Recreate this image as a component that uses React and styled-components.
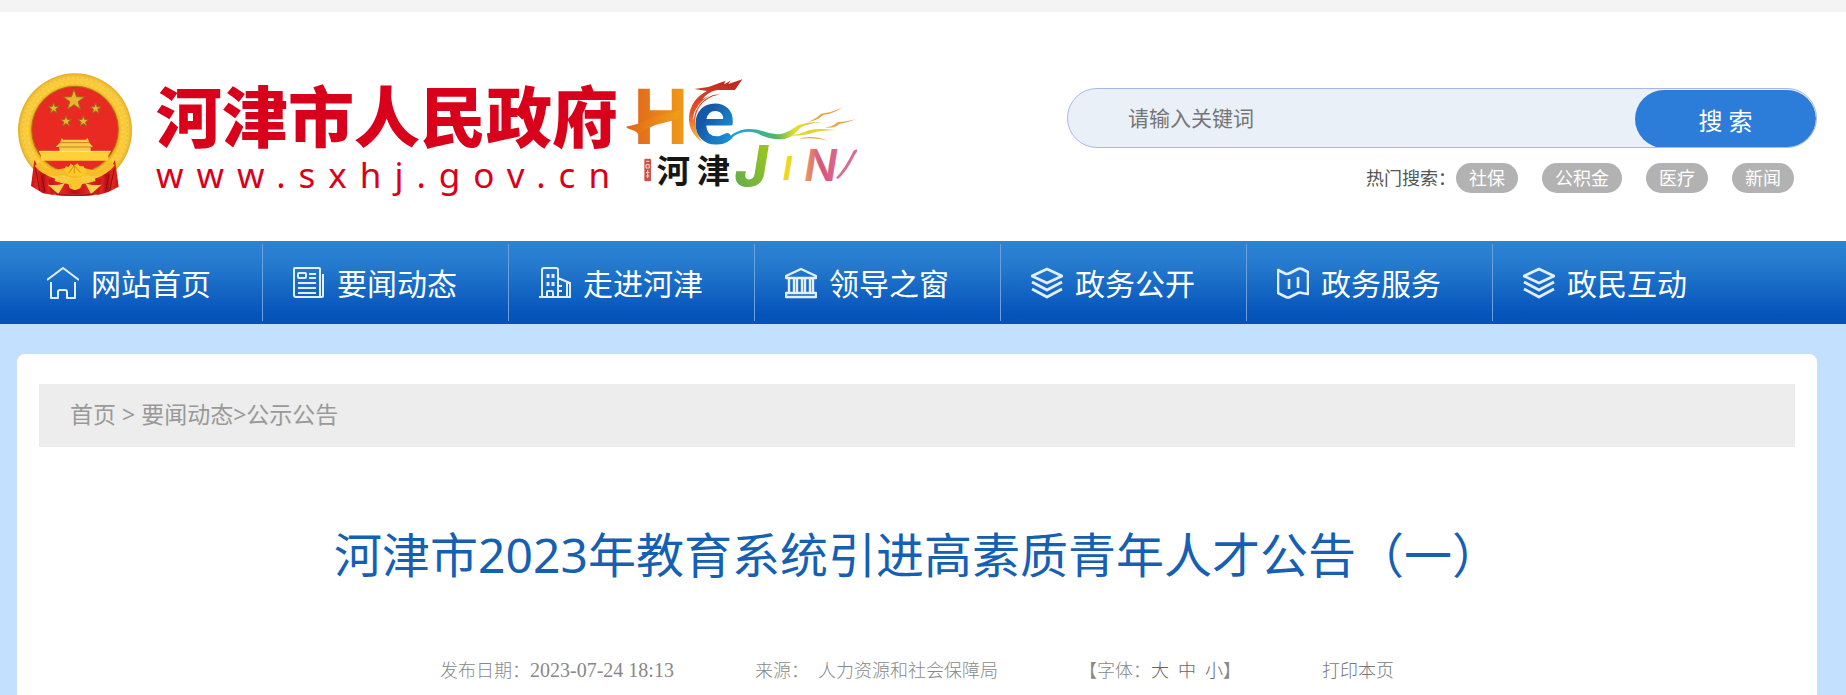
import React, { useState } from 'react';
import styled, { createGlobalStyle } from 'styled-components';

const GlobalStyle = createGlobalStyle`
    * {
        box-sizing: border-box;
    }
    body {
        margin: 0;
        background: #c3e0ff;
        font-family: "Noto Sans", "Noto Sans CJK SC", sans-serif;
    }
    a {
        color: inherit;
        text-decoration: none;
    }
    button {
        font-family: inherit;
        border: 0;
        padding: 0;
        cursor: pointer;
    }
`;

const Page = styled.div`
    min-height: 100vh;
    display: flex;
    flex-direction: column;
`;
const TopBar = styled.div`
    height: 12px;
    background: #f4f4f4;
`;
const Header = styled.header`
    display: flex;
    justify-content: space-between;
    align-items: flex-start;
    padding: 60px 29px 45px 17px;
    background: #fff;
`;
const Brand = styled.a`
    display: flex;
    align-items: flex-start;
`;
const BrandText = styled.div`
    margin: 0 2px 0 22px;
    color: #d9001b;
`;
const BrandName = styled.div`
    font-size: 66px;
    line-height: 88px;
    font-weight: 900;
    white-space: nowrap;
`;
const BrandUrl = styled.div`
    font-size: 35px;
    line-height: 30px;
    letter-spacing: 13px;
    white-space: nowrap;
`;
const LogoArt = styled.svg`
    flex: none;
    margin-top: 5px;
    overflow: visible;
`;
const SearchArea = styled.div`
    flex: 0 1 750px;
    padding-top: 16px;
`;
const SearchForm = styled.form`
    display: flex;
    height: 60px;
    border: 1px solid #a7b9e6;
    border-radius: 30px;
    background: #eaf0f8;
    overflow: hidden;
`;
const SearchInput = styled.input`
    flex: 1;
    min-width: 0;
    padding: 0 60px;
    border: 0;
    outline: 0;
    background: transparent;
    color: #333;
    font-family: inherit;
    font-size: 21px;
    &::placeholder {
        color: #757575;
    }
`;
const SearchButton = styled.button`
    width: 181px;
    height: 58px;
    margin-top: 1px;
    border-radius: 29px;
    background: #2c7cd9;
    color: #fff;
    font-size: 24px;
`;
const HotWords = styled.div`
    display: flex;
    align-items: center;
    justify-content: flex-end;
    margin: 15px 23px 0 0;
    font-size: 18px;
    line-height: 30px;
    color: #555;
`;
const HotWord = styled.a`
    padding: 0 13px;
    border-radius: 15px;
    background: #b2b2b2;
    color: #fff;
    & + & {
        margin-left: 24px;
    }
`;

const Nav = styled.nav`
    display: flex;
    padding: 3px 17px;
    background: linear-gradient(#2c84d5 0%, #2479cd 30%, #0554bb 88%, #0453b9 100%);
`;
const NavItem = styled.a`
    display: flex;
    align-items: center;
    gap: 12px;
    flex: 0 1 246px;
    height: 77px;
    padding: 3px 0 0 30px;
    color: #fff;
    font-size: 30px;
    line-height: 44px;
    white-space: nowrap;
    border-right: 1px solid #6ba0dc;
    &:last-child {
        border-right: 0;
    }
    svg {
        flex: none;
    }
`;

const Card = styled.main`
    flex: 1;
    margin: 30px 29px 0 17px;
    padding: 30px 22px 0;
    background: #fff;
    border-radius: 8px 8px 0 0;
`;
const Crumbs = styled.div`
    padding: 0 31px 2px;
    background: #ededed;
    color: #999;
    font-size: 23px;
    line-height: 61px;
`;
const Title = styled.h1`
    margin: 72px 0 0;
    color: #1660b3;
    font-size: 48px;
    font-weight: 400;
    line-height: 72px;
    text-align: center;
`;
const Meta = styled.div`
    display: flex;
    justify-content: center;
    align-items: baseline;
    gap: 81px;
    margin-top: 66px;
    padding-bottom: 12px;
    font-family: "Liberation Serif", "Noto Sans CJK SC", serif;
    font-size: 18px;
    font-weight: 300;
    line-height: 26px;
    color: #888;
    white-space: pre;
`;
const MetaItem = styled.div`
    display: flex;
    align-items: baseline;
    gap: ${props => props.gap || 0}px;
`;
const DateText = styled.time`
    font-size: 20px;
`;
const MetaButton = styled.button`
    background: none;
    color: ${props => (props.dark ? '#666' : '#777')};
    font-size: 18px;
    font-weight: 300;
    line-height: 26px;
`;

const starPoints = (cx, cy, r) => {
    const pts = [];
    for (let i = 0; i < 10; i++) {
        const rad = i % 2 ? r * 0.4 : r;
        const a = (Math.PI / 5) * i - Math.PI / 2;
        pts.push(`${cx + rad * Math.cos(a)},${cy + rad * Math.sin(a)}`);
    }
    return pts.join(' ');
};

const Emblem = () => (
    <svg width="117" height="124" viewBox="52 50 351 372" aria-hidden="true">
        <defs>
            <radialGradient id="gold" cx="226" cy="225" r="172" gradientUnits="userSpaceOnUse">
                <stop offset="0.74" stopColor="#d59a16" />
                <stop offset="0.8" stopColor="#fbc52c" />
                <stop offset="0.92" stopColor="#f8cf45" />
                <stop offset="1" stopColor="#e5a91f" />
            </radialGradient>
            <linearGradient id="drape" x1="0" y1="0" x2="1" y2="0">
                <stop offset="0" stopColor="#c4121a" />
                <stop offset="0.25" stopColor="#e8261f" />
                <stop offset="0.5" stopColor="#b31016" />
                <stop offset="0.75" stopColor="#e8261f" />
                <stop offset="1" stopColor="#c4121a" />
            </linearGradient>
        </defs>
        <circle cx="226" cy="225" r="171" fill="url(#gold)" />
        <circle cx="226" cy="225" r="158" fill="none" stroke="#e8b032" strokeWidth="3" strokeDasharray="5 9" />
        <circle cx="226" cy="225" r="143" fill="none" stroke="#fcd75c" strokeWidth="4" strokeDasharray="8 7" />
        <circle cx="226" cy="223" r="130" fill="#e92a22" stroke="#a8741a" strokeWidth="3" />
        {[[223, 135, 33], [162, 159, 17], [288, 160, 17], [199, 198, 17], [251, 198, 17]].map(([x, y, r]) => (
            <polygon key={`${x}-${y}`} points={starPoints(x, y, r)} fill="#e9b52f" stroke="#9c6a1c" strokeWidth="3" />
        ))}
        <path d="M186 247l4 6h68l6-6 4 14 12 14h-7v12H179v-12h-11l14-14z" fill="#f9cb4a" />
        <path d="M180 262h90M176 275h99" stroke="#c98317" strokeWidth="3" />
        <path d="M117 287h217l-8 14v15H124v-15z" fill="#ffd038" />
        <path d="M118 288h215" stroke="#ffe98e" strokeWidth="3" />
        <path d="M104 314q20 46 62 56l-10 48-26-4-36-22z" fill="url(#drape)" />
        <path d="M346 314q-20 46-60 56l12 48 28-8 31-16z" fill="url(#drape)" />
        <path d="M146 370q80 34 160 0l-8 48H154z" fill="url(#drape)" />
        <path d="M113 326q26 38 83 22 30 22 58 0 52 18 84-24" fill="none" stroke="#f6bd28" strokeWidth="19" />
        <path d="M194 345l4-12 9 2 6-10 10 6 10-7 7 9 11-1 7 12 3 8-15 9H208z" fill="#ffc928" />
        <path d="M208 352l16-22 18 22M224 330v24" fill="none" stroke="#d98a13" strokeWidth="3" />
        <path d="M144 388q34 4 52-6l-20 34zM306 388q-34 4-50-6l18 34z" fill="#f8cf4e" />
        <path d="M196 380l12-5 6-6 12 4 12-4 7 6 12 6-10 6-5 12-16 6-16-6-4-12z" fill="#fac62c" />
        <path d="M108 340l12 66M126 360l10 50M344 340l-14 66M328 358l-10 50" stroke="#95090f" strokeWidth="3" />
        <path d="M170 417q56 6 112 0" fill="none" stroke="#a1131a" strokeWidth="5" />
    </svg>
);

const CityLogo = () => (
    <LogoArt width="235" height="115" viewBox="75 35 705 345" role="img" aria-label="HEJIN 河津">
        <defs>
            <linearGradient id="hFill" x1="0" y1="0" x2="1" y2="0">
                <stop offset="0" stopColor="#e2661a" />
                <stop offset="1" stopColor="#f0a018" />
            </linearGradient>
            <linearGradient id="eFill" x1="0" y1="0" x2="0.7" y2="1">
                <stop offset="0.5" stopColor="#1558a8" />
                <stop offset="1" stopColor="#1b9cdc" />
            </linearGradient>
            <linearGradient id="tailFill" x1="0.4" y1="0" x2="0.2" y2="1">
                <stop offset="0" stopColor="#c02a20" />
                <stop offset="0.6" stopColor="#e8562a" />
                <stop offset="1" stopColor="#f9c33c" />
            </linearGradient>
            <linearGradient id="wave" x1="340" y1="0" x2="720" y2="0" gradientUnits="userSpaceOnUse">
                <stop offset="0" stopColor="#1673bd" />
                <stop offset="0.2" stopColor="#18a8da" />
                <stop offset="0.5" stopColor="#55b95c" />
                <stop offset="0.65" stopColor="#e8de2c" />
                <stop offset="1" stopColor="#e99a45" />
            </linearGradient>
            <linearGradient id="jFill" x1="0" y1="1" x2="1" y2="0">
                <stop offset="0.1" stopColor="#62ad4d" />
                <stop offset="1" stopColor="#a6c818" />
            </linearGradient>
            <linearGradient id="nFill">
                <stop offset="0" stopColor="#eda061" />
                <stop offset="0.5" stopColor="#d5557d" />
                <stop offset="1" stopColor="#d96a90" />
            </linearGradient>
        </defs>
        <text x="94" y="236" fontSize="232" fontWeight="700" fontFamily="Noto Sans" fill="url(#hFill)">H</text>
        <path d="M78 184q44-8 84-29l80-20-6 26-70 18q-32 14-50 30-6-12-22-16-14-4-16-9z" fill="url(#hFill)" />
        <path d="M427 42l-22 32h-54q-28 6-44 28 22-14 52-15-52 12-68 52-16 46 16 91-42-26-40-75 4-52 54-78l-38-6 42-6 50-18-2 10 18-11-6 10z" fill="url(#tailFill)" />
        <path d="M279 162q8-52 58-74M286 174q8-50 56-82" fill="none" stroke="#fff" strokeWidth="3" />
        <text x="280" y="235" fontSize="234" fontWeight="900" fontFamily="Lato" fill="url(#eFill)">e</text>
        <path d="M340 230q34 6 58-24 38-26 92-8 36 14 62 6 22-8 42-24 32-12 74-10-46 4-68 18-26 36-64 34-30 0-64-18-36-12-70 8-38 36-62 18z" fill="url(#wave)" />
        <path d="M560 211q40-2 66-16 34-8 82 0-32-2-58 4-38 14-90 12z" fill="#e3d52f" />
        <path d="M620 171q24-8 44-26 32-4 62-18-22 16-56 22-20 18-50 22zM674 187q24-2 38-16 26-2 56-9-24 10-50 14-16 14-44 11zM596 220q44-12 90 7-38-12-90-7z" fill="#eaa443" />
        <rect x="133" y="280" width="20" height="68" rx="3" fill="#c85349" />
        <path d="M138 288h10M138 298h10v10h-10zM143 314v24M138 322h10M138 332h10" fill="none" stroke="#f3d3cd" strokeWidth="3" />
        <text x="170" y="354" fontSize="100" fontWeight="700" fontFamily="Noto Sans CJK SC" fill="#161616">河</text>
        <text x="290" y="354" fontSize="100" fontWeight="700" fontFamily="Noto Sans CJK SC" fill="#161616">津</text>
        <text x="404" y="362" fontSize="168" fontWeight="800" fontStyle="italic" fontFamily="Inter" fill="url(#jFill)">J</text>
        <text x="548" y="344" fontSize="100" fontWeight="700" fontStyle="italic" fontFamily="Inter" fill="#ecd91f">I</text>
        <text x="612" y="346" fontSize="132" fontWeight="600" fontStyle="italic" fontFamily="Inter" fill="url(#nFill)">N</text>
        <path d="M708 338q28-30 52-80 6-8 12-5 0 8-8 16-24 50-50 72z" fill="#d96a90" />
    </LogoArt>
);

const Icon = ({ children, weight = 2 }) => (
    <svg width="32" height="34" viewBox="0 0 32 34" fill="none" stroke="#e3eefb" strokeWidth={weight} strokeLinejoin="round" aria-hidden="true">
        {children}
    </svg>
);

const HomeIcon = () => (
    <Icon>
        <path d="M0 13L16 1l16 12M4 15v16h7v-6q0-2 2-2h5q2 0 2 2v6h8V15" />
    </Icon>
);
const NewsIcon = () => (
    <Icon>
        <path d="M2 1h24q1 0 1 1v28H3q-2 0-2-2V2q0-1 1-1zM27 30h2q1 0 1-1V7" />
        <rect x="5" y="6" width="8" height="5" rx="1" />
        <path d="M16 7h7M16 11h7M5 16h18M5 21h18M5 26h18" />
    </Icon>
);
const BuildingIcon = () => (
    <Icon>
        <path d="M0 30h32M3 30V3q0-2 2-2h12q2 0 2 2v27M19 11l12 5v14M8 30v-5q0-1 1-1h4q1 0 1 1v5M19 19h4M19 24h4M28 15v15" />
        <path d="M9 7v4M14 7v4M9 15v4M14 15v4" strokeWidth="3" />
    </Icon>
);
const BankIcon = () => (
    <Icon weight={2.4}>
        <path d="M1 9L16 2l15 7v2H1zM1 26h30v4H1zM4 12v14M9 12v14M12 12v14M17 12v14M20 12v14M25 12v14M28 12v14" />
    </Icon>
);
const LayersIcon = () => (
    <Icon weight={2.8}>
        <path d="M16 2l15 7-15 7L1 9zM1 15l15 8 15-8M1 22l15 8 15-8" />
    </Icon>
);
const MapIcon = () => (
    <Icon weight={2.6}>
        <path d="M1 3l8 4q2 0 4-1l8-4q2-1 4 0l6 3v22l-6-1q-2-1-4 0l-8 4q-2 1-4 0l-8-4z" />
        <path d="M12 12v10M21 10v11" />
    </Icon>
);

const hotWords = ['社保', '公积金', '医疗', '新闻'];

const navItems = [
    { name: '网站首页', icon: HomeIcon },
    { name: '要闻动态', icon: NewsIcon },
    { name: '走进河津', icon: BuildingIcon },
    { name: '领导之窗', icon: BankIcon },
    { name: '政务公开', icon: LayersIcon },
    { name: '政务服务', icon: MapIcon },
    { name: '政民互动', icon: LayersIcon },
];

const App = () => {
    const [keyword, setKeyword] = useState('');

    return (
        <Page>
            <GlobalStyle />
            <TopBar />
            <Header>
                <Brand href="#home">
                    <Emblem />
                    <BrandText>
                        <BrandName>河津市人民政府</BrandName>
                        <BrandUrl>www.sxhj.gov.cn</BrandUrl>
                    </BrandText>
                    <CityLogo />
                </Brand>
                <SearchArea>
                    <SearchForm onSubmit={e => e.preventDefault()}>
                        <SearchInput
                            aria-label="请输入关键词"
                            placeholder="请输入关键词"
                            value={keyword}
                            onChange={e => setKeyword(e.target.value)} />
                        <SearchButton type="submit">搜 索</SearchButton>
                    </SearchForm>
                    <HotWords>
                        <span>热门搜索：</span>
                        {hotWords.map(word => <HotWord href="#search" key={word}>{word}</HotWord>)}
                    </HotWords>
                </SearchArea>
            </Header>
            <Nav>
                {navItems.map(({ name, icon: NavIcon }) => (
                    <NavItem href="#nav" key={name}>
                        <NavIcon />
                        {name}
                    </NavItem>
                ))}
            </Nav>
            <Card>
                <Crumbs>
                    <a href="#home">首页</a> &gt; <a href="#news">要闻动态</a>&gt;<a href="#notice">公示公告</a>
                </Crumbs>
                <Title>河津市2023年教育系统引进高素质青年人才公告（一）</Title>
                <Meta>
                    <MetaItem>发布日期：<DateText>2023-07-24 18:13</DateText></MetaItem>
                    <MetaItem gap={9}><span>来源：</span><span>人力资源和社会保障局</span></MetaItem>
                    <MetaItem>
                        <span>【字体：</span>
                        <MetaItem gap={9}>
                            <MetaButton dark>大</MetaButton>
                            <MetaButton dark>中</MetaButton>
                            <MetaButton dark>小</MetaButton>
                        </MetaItem>
                        <span>】</span>
                    </MetaItem>
                    <MetaButton>打印本页</MetaButton>
                </Meta>
            </Card>
        </Page>
    );
};

export default App;
